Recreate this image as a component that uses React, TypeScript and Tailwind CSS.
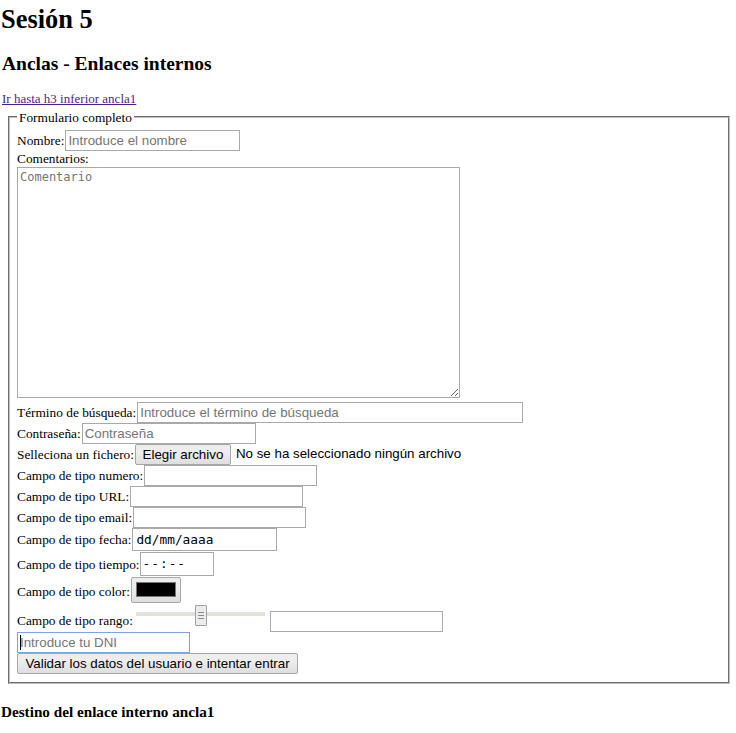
import React from "react";

const serif = "font-['Liberation_Serif','Times_New_Roman',serif]";
const sans = "font-['Liberation_Sans',Arial,sans-serif]";

const inputBase = `${sans} text-[13.33px] text-black bg-white border border-[#a9a9a9] px-[2px] outline-none placeholder:text-[#757575]`;
const buttonBase = `${sans} text-[13.33px] text-black border border-[#a6a6a6] rounded-[2px] bg-[linear-gradient(#ededed,#ededed_38%,#dedede)]`;

function TextInput({ width, placeholder }: { width: string; placeholder?: string }) {
  return <input type="text" placeholder={placeholder} className={`${inputBase} h-[21px] ${width}`} />;
}

function Row({
  label,
  children,
  h = "h-[21px]",
  gap = "gap-[1px]",
  labelClass = "",
}: {
  label: string;
  children: React.ReactNode;
  h?: string;
  gap?: string;
  labelClass?: string;
}) {
  return (
    <div className={`flex items-center ${gap} ${h}`}>
      <span className={`leading-[15.33px] whitespace-nowrap ${labelClass}`}>{label}</span>
      {children}
    </div>
  );
}

export default function App() {
  return (
    <div className={`${serif} text-[13.33px] text-black bg-white min-h-[733px]`}>
      <h1 className="pt-[4px] pl-[1px] text-[26.4px] font-bold leading-[30.67px]">Sesión 5</h1>
      <h2 className="mt-[17px] pl-[2px] text-[19.5px] font-bold leading-[23px]">Anclas - Enlaces internos</h2>
      <a href="#ancla1" className="block w-fit mt-[16px] pl-[2px] text-[13px] leading-[15.33px] text-[#551a8b] underline">
        Ir hasta h3 inferior ancla1
      </a>

      <fieldset className="mt-[3.5px] ml-[8px] mr-[6px] border-2 [border-style:groove] border-[#c0c0c0] pl-[7px] pr-[7px] pt-[5px] pb-[8px] min-w-0">
        <legend className="px-[2px] leading-[15.33px]">Formulario completo</legend>

        <Row label="Nombre:">
          <TextInput width="w-[175px]" placeholder="Introduce el nombre" />
        </Row>
        <div className="leading-[16px] h-[16px]">Comentarios:</div>
        <textarea
          placeholder="Comentario"
          className="block w-[443px] h-[231px] mb-[4px] border border-[#a9a9a9] p-[2px] font-['DejaVu_Sans_Mono',monospace] text-[12px] leading-[15px] outline-none placeholder:text-[#757575] resize-both"
        />

        <Row label="Término de búsqueda:">
          <TextInput width="w-[386px]" placeholder="Introduce el término de búsqueda" />
        </Row>
        <Row label="Contraseña:">
          <input type="password" placeholder="Contraseña" className={`${inputBase} h-[21px] w-[174px]`} />
        </Row>
        <Row label="Selleciona un fichero:">
          <button className={`${buttonBase} h-[21px] w-[96px]`}>Elegir archivo</button>
          <span className={`${sans} ml-[4px] whitespace-nowrap`}>No se ha seleccionado ningún archivo</span>
        </Row>
        <Row label="Campo de tipo numero:">
          <TextInput width="w-[173px]" />
        </Row>
        <Row label="Campo de tipo URL:">
          <TextInput width="w-[173px]" />
        </Row>
        <Row label="Campo de tipo email:">
          <TextInput width="w-[173px]" />
        </Row>
        <Row label="Campo de tipo fecha:" h="h-[24px]">
          <div className="h-[23px] w-[145px] border border-[#a9a9a9] pl-[3px] flex items-center font-['DejaVu_Sans_Mono',monospace] text-[12.8px] self-start">
            dd/mm/aaaa
          </div>
        </Row>
        <Row label="Campo de tipo tiempo:" h="h-[25px]" gap="gap-0">
          <div className="h-[24px] w-[74px] border border-[#a9a9a9] pl-[2px] flex items-center font-['DejaVu_Sans_Mono',monospace] text-[12.8px] tracking-[1px] self-start">
            --:--
          </div>
        </Row>
        <Row label="Campo de tipo color:" h="h-[26px]" labelClass="mt-[4px]">
          <div className={`${buttonBase} h-[26px] w-[50px] flex items-center justify-center`}>
            <div className="w-[40px] h-[15px] bg-black border border-[#777777]" />
          </div>
        </Row>

        <div className="flex items-start h-[29px]">
          <span className="mt-[10px] leading-[15.33px] whitespace-nowrap">Campo de tipo rango:</span>
          <div className="relative ml-[3px] w-[129px] h-[29px]">
            <div className="absolute left-0 right-0 top-[9.5px] h-[4px] bg-[#e5e1da]" />
            <div className="absolute left-[59px] top-[2px] w-[12px] h-[21px] border border-[#a0a0a0] bg-[#ececec] rounded-[1px] flex flex-col items-center justify-center gap-[2px]">
              <div className="w-[6px] h-px bg-[#8c8c8c]" />
              <div className="w-[6px] h-px bg-[#8c8c8c]" />
              <div className="w-[6px] h-px bg-[#8c8c8c]" />
            </div>
          </div>
          <div className="mt-[8px] ml-[5px]">
            <TextInput width="w-[173px]" />
          </div>
        </div>

        <div className="relative w-fit">
          <input
            type="text"
            placeholder="Introduce tu DNI"
            className={`${sans} text-[13.33px] bg-white h-[21px] w-[173px] border border-[#7ba4e4] px-[2px] outline-none placeholder:text-[#757575]`}
          />
          <span className="absolute left-[3px] top-[3px] w-px h-[15px] bg-black" />
        </div>
        <button className={`${buttonBase} h-[21px] w-[281px] block`}>
          Validar los datos del usuario e intentar entrar
        </button>
      </fieldset>

      <h3 id="ancla1" className="mt-[19px] pl-[1px] text-[15.2px] font-bold leading-[18px]">
        Destino del enlace interno ancla1
      </h3>
    </div>
  );
}
